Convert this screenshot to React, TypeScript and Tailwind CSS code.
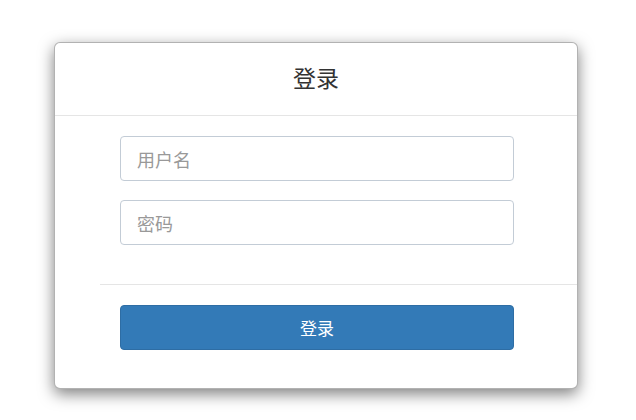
export default function App() {
  return (
    <div
      className="min-h-screen bg-white pt-[42px] pl-[54px]"
      style={{ fontFamily: '"Noto Sans CJK SC", "Liberation Sans", sans-serif' }}
    >
      <div className="w-[524px] rounded-md border border-black/30 bg-white shadow-[0_5px_15px_rgba(0,0,0,0.5)]">
        <div className="flex h-[73px] items-center justify-center border-b border-[#e5e5e5] pb-[3px]">
          <h3 className="text-[23px] leading-none text-[#333]">登录</h3>
        </div>

        <div className="flex flex-col gap-[19px] pl-[65px] pt-[20px] pb-[39px]">
          <input
            className="h-[45px] w-[394px] rounded border border-[#c3ccd6] px-4 text-[18px] text-[#555] outline-none placeholder:text-[#999]"
            placeholder="用户名"
          />
          <input
            type="password"
            className="h-[45px] w-[394px] rounded border border-[#c3ccd6] px-4 text-[18px] text-[#555] outline-none placeholder:text-[#999]"
            placeholder="密码"
          />
        </div>

        <div className="ml-[45px] border-t border-[#e5e5e5] pl-[20px] pt-[20px] pb-[38px]">
          <button
            type="button"
            className="h-[45px] w-[394px] rounded border border-[#2e6da4] bg-[#337ab7] text-[17px] text-white"
          >
            登录
          </button>
        </div>
      </div>
    </div>
  );
}
